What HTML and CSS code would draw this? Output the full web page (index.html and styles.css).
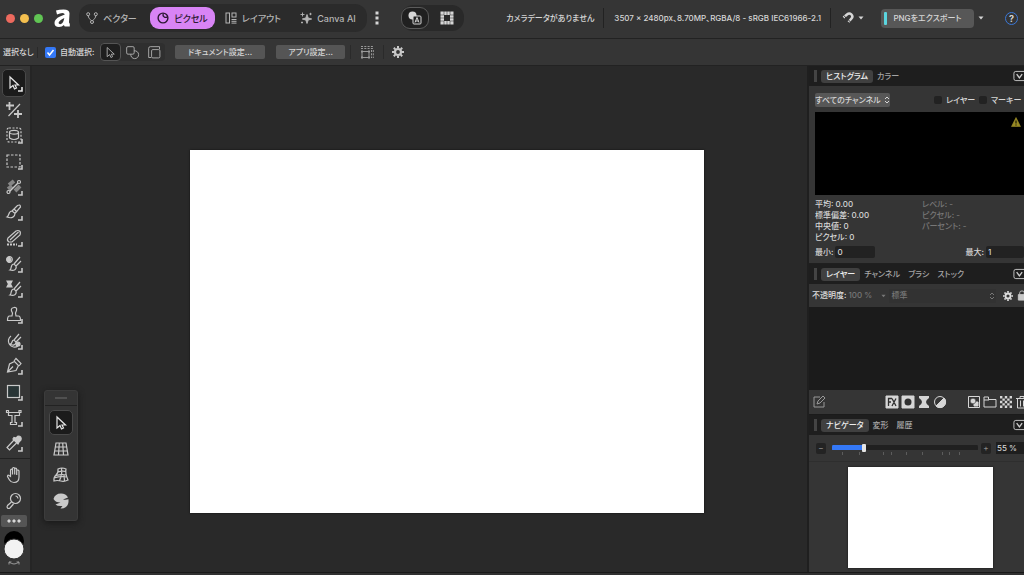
FILE: index.html
```html
<!DOCTYPE html>
<html lang="ja">
<head>
<meta charset="utf-8">
<title>Affinity</title>
<link rel="stylesheet" href="styles.css">
</head>
<body>
<svg class="defs" aria-hidden="true">
  <symbol id="cursor" viewBox="0 0 18 18"><path d="M5 3v11l3-2.500 1.500 3.500 2-1L10 11h3.500z" /></symbol>
  <symbol id="corner" viewBox="0 0 18 18"><path d="M17 13v4h-4" stroke-width="1.600"/></symbol>
  <symbol id="caret" viewBox="0 0 6 4"><path d="M.5.500h5L3 3.500z" fill="currentColor" stroke="none"/></symbol>
  <symbol id="chev" viewBox="0 0 12 12"><rect x="1" y="1" width="14" height="10" rx="2"/><path d="m4 4 3 4 3-4" stroke-width="1.500"/></symbol>
  <symbol id="updown" viewBox="0 0 6 8"><path d="m1 3 2-2 2 2M1 5l2 2 2-2"/></symbol>
  <symbol id="gear" viewBox="0 0 12 12"><circle cx="6" cy="6" r="3" stroke-width="2.200"/><path d="M6 0v2M6 10v2M0 6h2M10 6h2M1.800 1.800l1.400 1.400M8.800 8.800l1.400 1.400M10.200 1.800 8.800 3.200M3.200 8.800l-1.400 1.400" stroke-width="2"/></symbol>
</svg>

<header class="titlebar">
  <div class="lights"><i class="red"></i><i class="yellow"></i><i class="green"></i></div>
  <svg class="logo" viewBox="0 0 16 18"><path d="M2 1.500Q5 .5 9.500.500 15.500.500 15.500 4.500L15 13q0 1.500.8 1.500v3h-4.300Q10 17.500 10 16q-2 2-5 2-4.500 0-4.500-4 0-4 5.500-6.500l4.800-2q-.3-1.500-2.300-1.500-2.500 0-5.500 1.500zM4.500 14Q5 11.500 10.300 9q-.8 5-3.300 6-2 .5-2.500-1z" fill="#fff" stroke="none" fill-rule="evenodd"/></svg>
  <nav class="studios">
    <button class="studio vector"><svg viewBox="0 0 12 12"><circle cx="2.200" cy="2.200" r="1.500"/><circle cx="9.800" cy="2.200" r="1.500"/><circle cx="6" cy="10" r="1.500"/><path d="M2.200 3.700C2.300 6 4 7 5.200 8.600M9.800 3.700C9.700 6 8 7 6.800 8.600"/></svg>ベクター</button>
    <button class="studio pixel"><svg viewBox="0 0 12 12"><circle cx="6" cy="6" r="4.900" stroke-width="1.400"/><path d="M6.500 1.500a2.500 2.500 0 0 0 3.800 3.200" stroke-width="1.200"/></svg>ピクセル</button>
    <button class="studio layout"><svg viewBox="0 0 12 12"><rect x="1" y="1" width="3.500" height="10"/><rect x="7" y="1" width="4" height="4"/><path d="M6.500 7.500H11.500M6.500 9.300H11.500M6.500 11.100H11.500"/></svg>レイアウト</button>
    <button class="studio ai"><svg viewBox="0 0 12 12"><path d="M7 2.500 8.200 6l3.500 1-3.500 1L7 11.500 5.800 8l-3.500-1 3.500-1zM2.500.500v4M.5 2.500h4M10.500.800v2.400M9.300 2h2.400M2 9.500v2M1 10.500h2" fill="currentColor" stroke-width=".9"/></svg>Canva AI</button>
  </nav>
  <button class="more" aria-label="その他"><svg viewBox="0 0 4 14"><path d="M.5.500h3v3h-3zM.5 5.500h3v3h-3zM.5 10.500h3v3h-3z" fill="currentColor" stroke="none"/></svg></button>
  <div class="modes">
    <button class="mode on" aria-label="プレビュー"><svg viewBox="0 0 14 14"><circle cx="4.500" cy="4.500" r="4" fill="currentColor" stroke="none"/><rect x="5" y="5" width="8" height="8" rx="1" fill="#202020"/><path d="m7 11.500 2-5 2 5M7.700 10h2.600"/></svg></button>
    <button class="mode" aria-label="グリッド"><svg viewBox="0 0 14 14"><path d="M.5.500h13v13H.5zm3.500 3.500v6h6V4z" fill="currentColor" fill-rule="evenodd" stroke="none"/><path d="M4 0v4M10 0v4M4 10v4M10 10v4M0 4h4M0 10h4M10 4h4M10 10h4M7 0v4M7 10v4M0 7h4M10 7h4" stroke="#272727" stroke-width=".5"/></svg></button>
  </div>
  <div class="docinfo"><span class="camera">カメラデータがありません</span><span class="facts">3507 × 2480px、8.70MP、RGBA/8 - sRGB IEC61966-2.1</span></div>
  <button class="snap" aria-label="スナップ"><svg viewBox="0 0 12 12"><path d="M1.500 5.500 5 2.500c3-2.500 7 1 4.500 4L6.500 10" stroke-width="2.500"/><path d="m2 3.500 2 2.500M6 7.500 8.500 10" stroke="#353535"/></svg><svg class="caret"><use href="#caret"/></svg></button>
  <button class="export">PNGをエクスポート</button>
  <button class="drop" aria-label="エクスポート設定"><svg class="caret"><use href="#caret"/></svg></button>
  <button class="help" aria-label="ヘルプ">?</button>
</header>

<div class="context">
  <span class="selection">選択なし</span>
  <label class="auto"><input type="checkbox" checked>自動選択:</label>
  <div class="picks">
    <button class="pick on" aria-label="移動"><svg><use href="#cursor"/></svg></button>
    <button class="pick" aria-label="図形"><svg viewBox="0 0 18 18"><rect x="2" y="2" width="9" height="9" rx="1.500"/><path d="M11 7a4.700 4.700 0 1 1-4 4"/></svg></button>
    <button class="pick" aria-label="グループ"><svg viewBox="0 0 18 18"><path d="M2 15V4q0-2 2-2h11v3M2 15h3"/><rect x="5.500" y="5.500" width="10" height="10" rx="1.500"/></svg></button>
  </div>
  <button class="plain doc">ドキュメント設定...</button>
  <button class="plain">アプリ設定...</button>
  <button class="bare grid" aria-label="整列"><svg viewBox="0 0 14 14"><path d="M1 1.500h12M1 3.500h12" stroke-dasharray="2 1.300"/><path d="M2 6.500h7v6H2z" /><path d="M1 6.500h2M8 6.500h2M1 12.500h2M8 12.500h2" stroke-width="2"/><path d="M11.500 5v8M13.300 5v8" stroke-dasharray="2 1.300"/></svg></button>
  <button class="bare" aria-label="設定"><svg class="gear"><use href="#gear"/></svg></button>
</div>

<main class="workspace">
  <aside class="tools">
    <div class="toolset">
      <button class="tool on" aria-label="移動ツール"><svg viewBox="0 0 18 18"><use href="#cursor"/><use href="#corner"/></svg></button>
      <button class="tool" aria-label="切り抜き"><svg viewBox="0 0 18 18"><path d="M1 4.500h8M4.500 1v8M9 13h8M13 9v8" stroke-width="1.800"/><path d="M3.500 15 15 3"/></svg></button>
      <button class="tool" aria-label="AI選択"><svg viewBox="0 0 18 18"><rect x="2" y="2" width="14" height="14" rx="2" stroke-dasharray="2 1.500"/><path d="M4.500 6v6q4.500 3 9 0V6"/><ellipse cx="9" cy="6.200" rx="4.500" ry="1.900"/><use href="#corner"/></svg></button>
      <button class="tool" aria-label="マーキー"><svg viewBox="0 0 18 18"><rect x="2" y="3" width="13" height="12" stroke-dasharray="2.500 1.500"/><use href="#corner"/></svg></button>
      <button class="tool" aria-label="グラデーション"><svg viewBox="0 0 18 18"><path d="m4 7 5-4M3 11l4-3M10 13l5-5" stroke-width="4" opacity=".55"/><path d="M4 14 13 5" stroke-width="1.500"/><circle cx="3.500" cy="14" r="1.500" fill="#353535"/><circle cx="14" cy="4" r="1.500" fill="#353535"/><use href="#corner"/></svg></button>
      <button class="tool" aria-label="ペイントブラシ"><svg viewBox="0 0 18 18"><path d="M7 8 12.500 2.500q3-1.500 3 1.500L10 10.500zM7 8c-4 0-2.500 5-5 6 5 2 8-.5 8-3.500"/><path d="m9 6 3 3"/><use href="#corner"/></svg></button>
      <button class="tool" aria-label="消しゴム"><svg viewBox="0 0 18 18"><path d="m3 9 8-7q2-1 3.500 0t.5 4l-8 7H4q-2.500-1.500-1-4zM5 11l8.500-8"/><path d="M2 15.500h10" stroke-width="2" stroke-dasharray="2 1"/><use href="#corner"/></svg></button>
      <button class="tool" aria-label="覆い焼き"><svg viewBox="0 0 18 18"><circle cx="4.500" cy="4.500" r="2.800"/><path d="M4.500 2a2.500 2.500 0 0 0 0 5l1.500-2z" fill="currentColor"/><path d="m9 9 6-7M11 11l5-5M9 9c-4 0-2 5-4 6 4 1 7-.5 6-4z"/><use href="#corner"/></svg></button>
      <button class="tool" aria-label="クローンブラシ"><svg viewBox="0 0 18 18"><path d="M2 1h5L5.500 4 7 7H2l1.500-3z" fill="currentColor"/><path d="m9 9 6-7M11 11l5-5M9 9c-4 0-2 5-4 6 4 1 7-.5 6-4z"/><use href="#corner"/></svg></button>
      <button class="tool" aria-label="スタンプ"><svg viewBox="0 0 18 18"><path d="M7 10 7.500 7Q4.500 2 9 1.500T10.500 7l.5 3h2.500q2 0 2 4.500h-13q0-4.500 2-4.500z"/><use href="#corner"/></svg></button>
      <button class="tool" aria-label="修復ブラシ"><svg viewBox="0 0 18 18"><path d="M6 4a6 6 0 1 0 7 10M9 8l5-6M11 10l5-5M9 8c-3 0-1 4-4 4 3 2 6 1 6-2z"/><circle cx="13" cy="12" r="2" fill="currentColor"/><use href="#corner"/></svg></button>
      <button class="tool" aria-label="ペン"><svg viewBox="0 0 18 18"><path d="m2.500 15 2-8 5-2.500 4 4-2.500 5zM9 4l2-2.500 5 5L14 9M3 14.500l5-5"/><use href="#corner"/></svg></button>
      <button class="tool" aria-label="長方形"><svg viewBox="0 0 18 18"><rect x="2.500" y="2.500" width="12" height="12" fill="#293536"/><use href="#corner"/></svg></button>
      <button class="tool" aria-label="テキスト"><svg viewBox="0 0 18 18"><path d="M3.500 3.500h11v3H10v7h1.500v2h-6v-2H7v-7H3.500z"/><path d="M1.500 1.500h2v2h-2zM14 1.500h2v2h-2z"/><use href="#corner"/></svg></button>
      <button class="tool" aria-label="カラーピッカー"><svg viewBox="0 0 18 18"><path d="m9 6-7 7.500 2.500 2.500 7-7"/><path d="m8 5 5 5 1-2 2-2q1-4-3-4l-2 2-2-.5z" fill="currentColor"/><use href="#corner"/></svg></button>
    </div>
    <div class="viewset">
      <button class="tool" aria-label="表示"><svg viewBox="0 0 18 18"><path d="M5.500 10.500V4.500q0-1.300 1-1.300t1 1.300V8.500 3q0-1.500 1.100-1.500T9.700 3v5.500V3.500q0-1.300 1-1.300t1 1.300v5.500V5q0-1 1-1t1.300 1v6q0 5.500-5 5.500-3 0-4.500-2.500L2.500 10.500q0-2 1.500-1z"/></svg></button>
      <button class="tool" aria-label="ズーム"><svg viewBox="0 0 18 18"><circle cx="10.500" cy="6.500" r="5"/><path d="m6.500 10-4 3.500q-1 1.500 0 2.500t2.500 0l3.500-4"/><path d="M10.500 4q2 0 2.500 2.500"/></svg></button>
      <button class="dots" aria-label="その他のツール"><svg viewBox="0 0 14 4"><path d="M1 1h2v2H1zM6 1h2v2H6zM11 1h2v2h-2z" fill="currentColor"/></svg></button>
      <button class="colours" aria-label="カラー"><svg viewBox="0 0 24 38"><circle cx="12" cy="11" r="10" fill="#000" stroke="none"/><circle cx="12" cy="19" r="10" fill="#f2f2f2" stroke="#333"/><path d="M7 32q5 4 10 0M7 34.500V32h2.500M17 34.500V32h-2.500" stroke="#999"/></svg></button>
    </div>
  </aside>

  <section class="canvas">
    <div class="page"></div>
    <div class="palette">
      <div class="grip"></div>
      <button class="tool on" aria-label="移動"><svg><use href="#cursor"/></svg></button>
      <button class="tool" aria-label="遠近"><svg viewBox="0 0 18 18"><path d="M4 3h10l2 12H2zM3.500 7h11M3 11h12M7.300 3 6.500 15M10.700 3l.8 12"/></svg></button>
      <button class="tool" aria-label="メッシュ"><svg viewBox="0 0 18 18"><path d="M6 3q4-2 8 0-1 4 2 11-4 2-7 1-4-1-7 0-.5-4 2-6t2-6zM4 9.500q5-1.500 10.500-.5M6 6q4-1.500 8-.5M9.500 2.500q1 6-2 12M12 9l.5 6M2 12q6-2 13-1"/></svg></button>
      <button class="tool" aria-label="ゆがみ"><svg viewBox="0 0 18 18"><path d="M1.500 7Q3 1.500 9 1.500q5 0 7 4l-5 2q3 .5 5.500-.2.500 6-3 8-2 1.500-5 1.200l2-2.500q-5 .5-7-1.500l5-2q-5 0-7-3.500z" fill="currentColor" stroke="none"/></svg></button>
    </div>
  </section>

  <aside class="panels">
    <div class="tabs"><button class="tab on">ヒストグラム</button><button class="tab">カラー</button><button class="menu" aria-label="メニュー"><svg><use href="#chev"/></svg></button></div>
    <div class="histogram">
      <div class="row">
        <button class="channel">すべてのチャンネル<svg><use href="#updown"/></svg></button>
        <label class="opt"><input type="checkbox">レイヤー</label>
        <label class="opt"><input type="checkbox">マーキー</label>
      </div>
      <div class="graph"><svg viewBox="0 0 10 10"><path d="m5 .5 4.500 9h-9z" fill="#988a25" stroke="#988a25" stroke-width=".6"/><path d="M5 3.500v3M5 7.500v1" stroke="#000"/></svg></div>
      <div class="stats">
        <div>平均: 0.00<br>標準偏差: 0.00<br>中央値: 0<br>ピクセル: 0</div>
        <div class="faint">レベル: -<br>ピクセル: -<br>パーセント: -</div>
      </div>
      <div class="range"><label>最小: <input value="0"></label><label>最大: <input value="1"></label></div>
    </div>
    <div class="tabs"><button class="tab on">レイヤー</button><button class="tab">チャンネル</button><button class="tab">ブラシ</button><button class="tab">ストック</button><button class="menu" aria-label="メニュー"><svg><use href="#chev"/></svg></button></div>
    <div class="opacity">
      <label for="alpha">不透明度:</label><input id="alpha" value="100 %" disabled><svg class="caret"><use href="#caret"/></svg>
      <button class="blend" disabled>標準<svg><use href="#updown"/></svg></button>
      <button class="bare" aria-label="設定"><svg class="gear"><use href="#gear"/></svg></button>
      <button class="bare" aria-label="ロック"><svg class="lock" viewBox="0 0 10 12"><path d="M1 5h8v6H1z" fill="currentColor"/><path d="M2.500 5V3q0-2 2.500-2t2.500 2v2"/></svg></button>
    </div>
    <div class="layers"></div>
    <div class="layerbar">
      <button class="bare edit" aria-label="編集"><svg viewBox="0 0 14 14"><path d="M8 2H2v10h10V7M5 9l1-3 5-5 2 2-5 5z"/></svg></button>
      <button class="bare" aria-label="効果"><svg viewBox="0 0 14 14"><path d="M1 1h12v12H1z" fill="currentColor"/><path d="M3.500 11V3.500H7M3.500 7H6M7 3.500l4 7.500M11 3.500 7 11" stroke="#303030" stroke-width="1.300"/></svg></button>
      <button class="bare" aria-label="マスク"><svg viewBox="0 0 14 14"><path d="M1 1h12v12H1z" fill="currentColor"/><circle cx="7" cy="7" r="3.500" fill="#303030" stroke="none"/></svg></button>
      <button class="bare" aria-label="ライブ"><svg viewBox="0 0 14 14"><path d="M2 1h10v2Q9 5 9 7t3 4v2H2v-2q3-2 3-4T2 3z" fill="currentColor" stroke="none"/></svg></button>
      <button class="bare adjust" aria-label="調整"><svg viewBox="0 0 14 14"><circle cx="7" cy="7" r="5.500"/><path d="M11 3A5.500 5.500 0 0 1 3 11z" fill="currentColor"/></svg></button>
      <button class="bare" aria-label="新規"><svg viewBox="0 0 14 14"><path d="M1.500 1.500h11v11h-11z"/><path d="M7 7h4v4H7z" fill="currentColor"/><circle cx="6" cy="6" r="2.800" fill="currentColor" stroke="#353535" stroke-width=".6"/></svg></button>
      <button class="bare" aria-label="グループ"><svg viewBox="0 0 14 14"><path d="M1 12V2h4.500v2.500H13V12zM1 5h5"/></svg></button>
      <button class="bare" aria-label="ピクセル"><svg viewBox="0 0 14 14"><path d="M1 2.200h12M1 7h12M1 11.800h12" stroke-width="2.400" stroke-dasharray="2.400 2.400"/><path d="M3.400 4.600H13M3.400 9.400H13" stroke-width="2.400" stroke-dasharray="2.400 2.400"/></svg></button>
      <button class="bare" aria-label="削除"><svg viewBox="0 0 14 14"><path d="M1 3.500h12M5 3V1.500h4V3M2.500 4v9h9V4M5.500 5.500v6M8.500 5.500v6"/></svg></button>
    </div>
    <div class="tabs"><button class="tab on">ナビゲータ</button><button class="tab">変形</button><button class="tab">履歴</button><button class="menu" aria-label="メニュー"><svg><use href="#chev"/></svg></button></div>
    <div class="zoom">
      <button class="step" aria-label="縮小">−</button>
      <div class="slide"><input type="range" min="0" max="100" value="21" aria-label="ズーム">
        <svg viewBox="0 0 146 3"><path d="M10.500 0v3M27.500 0v3M51.500 0v3M59.500 0v3M74.500 0v3M90.500 0v3M110.500 0v3M117.500 0v3M127.500 0v3" stroke="#5c5c5c"/></svg></div>
      <button class="step" aria-label="拡大">+</button>
      <input class="percent" value="55 %" aria-label="倍率">
    </div>
    <div class="preview"><div class="thumb"></div></div>
  </aside>
</main>
<footer class="status"></footer>
</body>
</html>
```
FILE: styles.css
```css
* { box-sizing: border-box; }
body {
  margin: 0;
  height: 100vh;
  display: flex;
  flex-direction: column;
  overflow: hidden;
  background: #353535;
  color: #d6d6d6;
  font: 500 8px/11px Inter, "Noto Sans CJK JP", sans-serif;
  font-feature-settings: "palt";
}
button, input {
  margin: 0;
  padding: 0;
  border: 0;
  background: none;
  color: inherit;
  font: inherit;
  font-feature-settings: inherit;
}
button { display: flex; align-items: center; justify-content: center; flex: none; white-space: nowrap; }
svg { display: block; flex: none; fill: none; stroke: currentColor; }
.defs { position: absolute; width: 0; height: 0; }
.caret { width: 6px; height: 4px; }
.gear { width: 12px; height: 12px; }

.titlebar { display: flex; align-items: center; flex: none; height: 39px; padding: 0 6px 2px; border-bottom: 1px solid #222; white-space: nowrap; }
.lights { display: flex; gap: 5px; margin-right: 11px; }
.lights i { width: 9px; height: 9px; border-radius: 50%; }
.red { background: #ed6a5e; }
.yellow { background: #f4bf4f; }
.green { background: #61c554; }
.logo { width: 16px; height: 18px; margin-right: 9px; }
.studios { display: flex; align-items: center; flex: none; width: 288px; height: 28px; border-radius: 12px; background: #2b2b2b; }
.studio { gap: 5px; height: 22px; border-radius: 9px; color: #b5b5b5; font-size: 9px; }
.studio svg { width: 12px; height: 12px; }
.vector { width: 65px; }
.pixel { width: 65px; margin: 0 6px; background: #d884f5; color: #2c1833; }
.layout { width: 64px; }
.ai { width: 74px; margin-left: 6px; }
.more { width: 20px; }
.more svg { width: 4px; height: 14px; }
.modes { display: flex; flex: none; align-items: center; height: 26px; margin-left: 14px; border-radius: 12px; background: #292929; }
.mode { width: 34px; height: 22px; }
.mode.on { width: 28px; margin-right: 1px; border: 1px solid #5b5b5b; border-radius: 9px; background: #202020; }
.mode svg { width: 14px; height: 14px; }
.docinfo { display: flex; flex: 1; justify-content: flex-end; align-items: center; line-height: 20px; }
.camera { padding-right: 9px; border-right: 1px solid #222; }
.facts { padding: 0 9px 0 10px; border-right: 1px solid #222; }
.snap { width: 22px; margin: 0 17px 0 11px; justify-content: space-between; }
.snap svg:first-child { width: 12px; height: 12px; }
.export { position: relative; width: 93px; height: 19px; border-radius: 4px; background: #575757; }
.export::before { content: ""; position: absolute; left: 3px; top: 3px; width: 3px; height: 13px; border-radius: 1px; background: #5bd5df; }
.drop { width: 6px; margin: 0 21px 0 4px; }
.help { width: 13px; height: 13px; border: 1px solid #3b78d8; border-radius: 50%; font-size: 9px; font-weight: 700; }

.context { display: flex; align-items: center; flex: none; height: 27px; padding: 0 3px; border-bottom: 1px solid #222; white-space: nowrap; }
.selection { width: 35px; border-right: 1px solid #292929; }
.auto { display: flex; align-items: center; gap: 4px; width: 55px; margin-left: 7px; }
input[type="checkbox"] { appearance: none; display: block; flex: none; width: 11px; height: 11px; border-radius: 2px; background: #222; }
.auto input:checked { background: #3478f6 url("data:image/svg+xml,%3Csvg xmlns='http://www.w3.org/2000/svg' viewBox='0 0 11 11'%3E%3Cpath d='m2.500 5.500 2 2.500 4-5' fill='none' stroke='white' stroke-width='1.500'/%3E%3C/svg%3E"); }
.picks { display: flex; flex: none; gap: 1px; margin-right: 10px; border-radius: 4px; background: #2f2f2f; }
.pick { width: 21px; height: 18px; border-radius: 4px; color: #bbb; }
.pick.on { border: 1px solid #555; background: #1e1e1e; }
.pick svg { width: 15px; height: 15px; }
.plain { width: 69px; height: 14px; border-radius: 2px; background: #555; }
.doc { width: 90px; margin-right: 11px; }
.bare svg { color: #c8c8c8; }
.bare.grid { margin: 0 8px 0 5px; padding: 0 9px; border: solid #2a2a2a; border-width: 0 1px; }
.grid svg { width: 14px; height: 14px; color: #999; }

.workspace { display: flex; flex: 1; min-height: 0; }
.tools { display: flex; flex-direction: column; flex: none; width: 32px; border-right: 2px solid #252525; background: #353535; }
.toolset { display: flex; flex-direction: column; flex: 1; padding: 3px 0 2px; border-bottom: 1px solid #222; }
.toolset .tool { flex: 1; }
.tool { width: 24px; min-height: 0; margin: 0 4px 0 2px; border-radius: 5px; color: #c9c9c9; }
.tool svg { width: 18px; height: 18px; stroke-width: 1.200; }
.tool.on { border: 1px solid #494949; background: #1b1b1b; color: #e6e6e6; }
.viewset { display: flex; flex-direction: column; flex: none; padding-top: 3px; }
.viewset .tool { height: 26px; }
.dots { height: 12px; margin: 1px 3px 3px 1px; border-radius: 2px; background: #555; }
.dots svg { width: 14px; height: 4px; }
.colours { height: 38px; margin: 0 2px 4px 0; }
.colours svg { width: 24px; height: 38px; }

.canvas { position: relative; display: flex; flex: 1; align-items: center; justify-content: center; min-width: 0; padding: 25px 103px 0 158px; background: #292929; }
.page { flex: 1; aspect-ratio: 515 / 364; background: #fff; box-shadow: 0 0 2px #111; }
.palette { position: absolute; left: 12px; top: 324px; display: flex; flex-direction: column; align-items: center; width: 34px; padding-bottom: 6px; border: 1px solid #3c3c3c; border-radius: 3px; background: #343434; box-shadow: 0 2px 6px #181818; }
.grip { align-self: stretch; height: 15px; margin-bottom: 4px; border-bottom: 1px solid #222; background: linear-gradient(#505050, #505050) center / 12px 2px no-repeat; }
.palette .tool { height: 25px; margin: 0 0 1px; }

.panels { display: flex; flex-direction: column; flex: none; width: 217px; border-left: 2px solid #1f1f1f; overflow: hidden; white-space: nowrap; }
.tabs { display: flex; align-items: center; flex: none; height: 20px; padding-left: 5px; background: #1e1e1e; overflow: hidden; }
.tabs::before { content: ""; width: 3px; height: 12px; margin-right: 4px; background: #444; }
.tab { height: 13px; padding: 0 4px; border-radius: 3px; color: #a5a5a5; }
.tab.on { padding: 0 5px; background: #404040; color: #eee; }
.menu { margin-left: auto; color: #ccc; }
.menu svg { width: 11px; height: 12px; }
.histogram { flex: none; height: 178px; padding: 7px 0 0 6px; border-bottom: 1px solid #1f1f1f; }
.row { display: flex; align-items: center; margin-bottom: 5px; }
.channel { gap: 3px; width: 75px; height: 14px; margin-right: 44px; border-radius: 2px; background: #575757; }
.channel svg, .blend svg { width: 6px; height: 8px; }
.opt { display: flex; align-items: center; gap: 4px; width: 49px; }
.opt input { width: 8px; height: 8px; }
.graph { display: flex; justify-content: flex-end; height: 83px; padding: 5px 3px; background: #000; }
.graph svg { width: 10px; height: 10px; }
.stats { display: grid; grid-template-columns: 107px 1fr; padding-top: 4px; }
.faint { color: #777; }
.range { display: flex; justify-content: space-between; margin-top: 3px; }
.range label { display: flex; align-items: center; gap: 2px; }
.range input { width: 40px; height: 12px; padding-left: 2px; border-radius: 2px; background: #222; }
.range label:last-child input { width: 38px; }
.opacity { display: flex; align-items: center; flex: none; height: 23px; padding-left: 3px; color: #ddd; overflow: hidden; }
.opacity > input { width: 33px; margin-left: 2px; color: #777; }
.opacity > .caret { width: 5px; color: #777; }
.blend { width: 107px; height: 14px; margin: 0 7px 0 3px; padding: 0 1px 0 2px; justify-content: space-between; background: #323232; color: #777; }
.opacity .gear { width: 10px; height: 10px; margin-right: 4px; color: #ddd; }
.lock { width: 10px; height: 11px; }
.layers { flex: none; height: 83px; background: #1b1b1b; }
.layerbar { display: flex; align-items: center; flex: none; height: 25px; padding-left: 3px; gap: 2px; border-bottom: 1px solid #1b1b1b; overflow: hidden; }
.layerbar svg { width: 14px; height: 14px; color: #d6d6d6; }
.edit { margin-right: 57px; }
.layerbar .edit svg { color: #999; }
.adjust { margin-right: 18px; }
.zoom { display: flex; align-items: center; flex: none; height: 27px; padding-left: 7px; border-bottom: 1px solid #2e2e2e; }
.step { width: 10px; height: 11px; border-radius: 2px; background: #232323; color: #888; }
.slide { width: 146px; margin: 2px 3px 0 6px; }
.slide input { appearance: none; display: block; width: 100%; height: 8px; background: linear-gradient(90deg, #3478f6 21%, #202020 21%) center / 100% 5px no-repeat; border-radius: 3px; }
.slide input::-webkit-slider-thumb { appearance: none; width: 4px; height: 8px; border-radius: 1px; background: #e5e5e5; }
.slide svg { width: 100%; height: 3px; }
.percent { flex: 1; min-width: 0; height: 12px; margin-left: 5px; padding-left: 1px; background: #1e1e1e; }
.preview { flex: 1; min-height: 0; padding: 5px 31px 4px 39px; }
.thumb { height: 100%; max-height: 102px; background: #fff; box-shadow: 0 0 2px #111; }
.status { flex: none; height: 3px; border-top: 1px solid #191919; background: #303030; }
```
